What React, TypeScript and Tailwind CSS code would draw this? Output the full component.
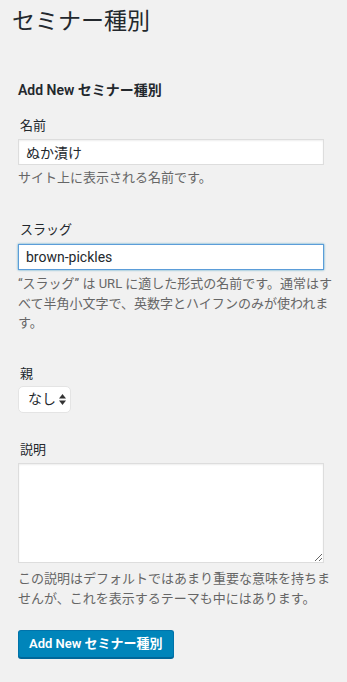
const font = { fontFamily: 'Roboto, "Noto Sans CJK JP", sans-serif' };

export default function App() {
  return (
    <div className="min-h-[682px] w-[347px] bg-[#f1f1f1] text-[#23282d]" style={font}>
      <div className="px-3 pt-[7px]">
        <h1 className="text-[23px] leading-[29px] font-normal">セミナー種別</h1>
      </div>
      <div className="px-[18px] pt-[44px]">
        <h2 className="text-[14px] font-semibold leading-[20px]">Add New セミナー種別</h2>

        <div className="mt-[17px]">
          <label className="block px-[2px] text-[13px] leading-[18px]">名前</label>
          <input
            className="mt-[4px] block h-[26px] w-[306px] border border-[#ddd] bg-white px-[7px] text-[14px] shadow-[inset_0_1px_2px_rgba(0,0,0,0.07)] outline-none"
            defaultValue="ぬか漬け"
            style={font}
          />
          <p className="mt-[3px] text-[13px] leading-[19px] text-[#666]">サイト上に表示される名前です。</p>
        </div>

        <div className="mt-[34px]">
          <label className="block px-[2px] text-[13px] leading-[18px]">スラッグ</label>
          <input
            className="mt-[5px] block h-[26px] w-[306px] border border-[#5b9dd9] bg-white px-[7px] text-[14px] shadow-[0_0_2px_rgba(30,140,190,0.8)] outline-none"
            defaultValue="brown-pickles"
            style={font}
          />
          <p className="mt-[4px] w-[322px] text-[13px] leading-[19.5px] text-[#666]">
            “スラッグ” は URL に適した形式の名前です。通常はすべて半角小文字で、英数字とハイフンのみが使われます。
          </p>
        </div>

        <div className="mt-[32px]">
          <label className="block px-[2px] text-[13px] leading-[18px]">親</label>
          <div className="mt-[3px] flex h-[27px] w-[53px] items-center rounded-[5px] border border-[#e4e4e4] bg-white pl-[9px] text-[14px]">
            <span>なし</span>
            <svg className="ml-[3px]" width="7" height="11" viewBox="0 0 7 11">
              <path d="M3.5 0 L7 4.5 L0 4.5 Z" fill="#333" />
              <path d="M0 6.5 L7 6.5 L3.5 11 Z" fill="#333" />
            </svg>
          </div>
        </div>

        <div className="mt-[28px]">
          <label className="block px-[2px] text-[13px] leading-[18px]">説明</label>
          <textarea
            className="mt-[4px] block h-[100px] w-[306px] border border-[#ddd] bg-white shadow-[inset_0_1px_2px_rgba(0,0,0,0.07)] outline-none"
          />
          <p className="mt-[6px] w-[320px] text-[13px] leading-[20px] text-[#666]">
            この説明はデフォルトではあまり重要な意味を持ちませんが、これを表示するテーマも中にはあります。
          </p>
        </div>

        <button
          className="mt-[21px] h-[28px] rounded-[3px] border border-[#0073aa] border-b-[#006799] bg-[#0085ba] px-[10px] text-[13px] font-semibold text-white shadow-[0_1px_0_#006799]"
          style={font}
        >
          Add New セミナー種別
        </button>
      </div>
    </div>
  );
}
